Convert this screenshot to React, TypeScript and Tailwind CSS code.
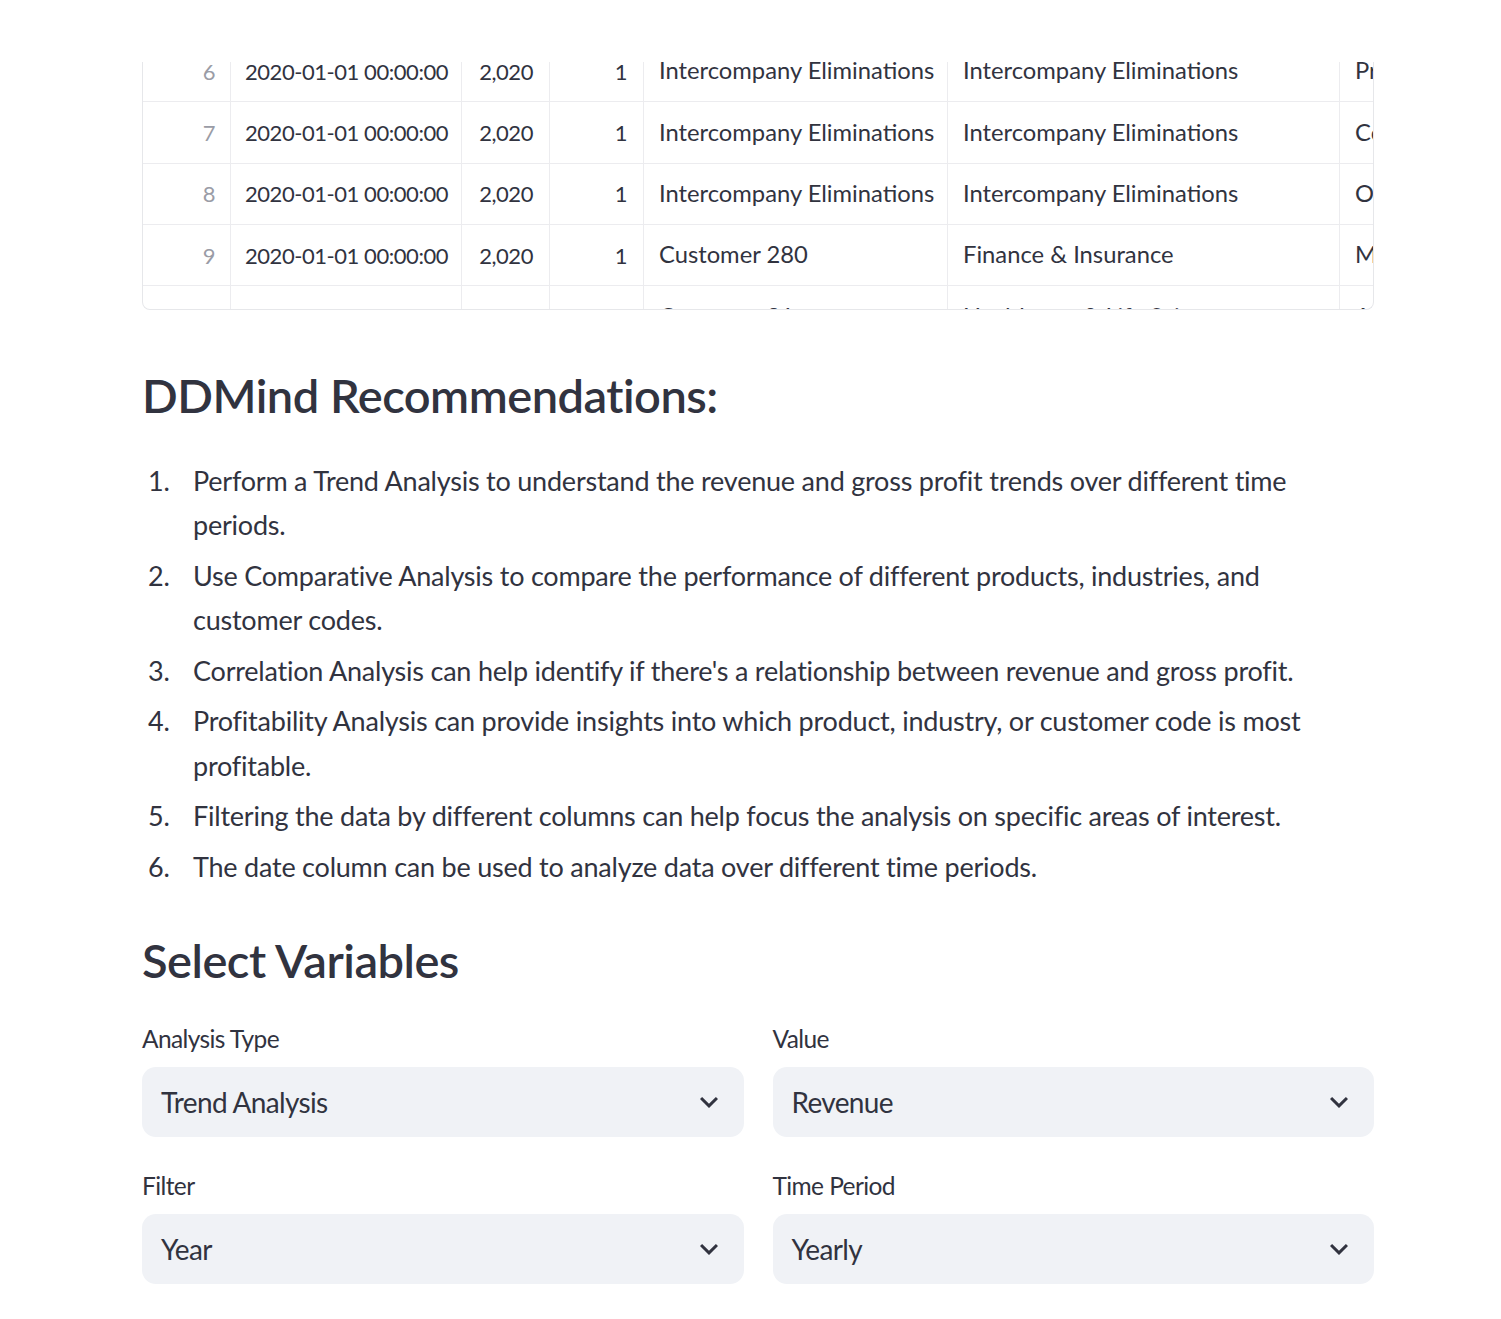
const ROWS = [
  { idx: 6, date: "2020-01-01 00:00:00", year: "2,020", month: "1", customer: "Intercompany Eliminations", industry: "Intercompany Eliminations", last: "Products" },
  { idx: 7, date: "2020-01-01 00:00:00", year: "2,020", month: "1", customer: "Intercompany Eliminations", industry: "Intercompany Eliminations", last: "Consulting" },
  { idx: 8, date: "2020-01-01 00:00:00", year: "2,020", month: "1", customer: "Intercompany Eliminations", industry: "Intercompany Eliminations", last: "Other" },
  { idx: 9, date: "2020-01-01 00:00:00", year: "2,020", month: "1", customer: "Customer 280", industry: "Finance & Insurance", last: "Maintenance" },
  { idx: 10, date: "2020-01-01 00:00:00", year: "2,020", month: "1", customer: "Customer 31", industry: "Healthcare & Life Sciences", last: "A" },
];

const RECS = [
  "Perform a Trend Analysis to understand the revenue and gross profit trends over different time periods.",
  "Use Comparative Analysis to compare the performance of different products, industries, and customer codes.",
  "Correlation Analysis can help identify if there's a relationship between revenue and gross profit.",
  "Profitability Analysis can provide insights into which product, industry, or customer code is most profitable.",
  "Filtering the data by different columns can help focus the analysis on specific areas of interest.",
  "The date column can be used to analyze data over different time periods.",
];

function Chevron() {
  return (
    <svg width="36" height="36" viewBox="0 0 24 24" fill="#31333f">
      <path d="M7.41 8.59 12 13.17l4.59-4.58L18 10l-6 6-6-6 1.41-1.41z" />
    </svg>
  );
}

function Select({ label, value }: { label: string; value: string }) {
  return (
    <div className="flex flex-col">
      <p className="text-[24.5px] leading-[28px] tracking-[-0.6px] text-[#31333f]">{label}</p>
      <div className="mt-[14px] flex h-[70px] items-center justify-between rounded-[14px] bg-[#f0f2f6] pl-[19px] pr-[17px]">
        <span className="text-[28px] tracking-[-0.65px] text-[#31333f]">{value}</span>
        <Chevron />
      </div>
    </div>
  );
}

export default function App() {
  return (
    <div className="min-h-[1319px] bg-white pb-[35px] text-[#31333f]" style={{ fontFamily: "Lato, 'Liberation Sans', sans-serif" }}>
      <div className="ml-[142px] w-[1232px]">
        {/* dataframe, scrolled */}
        <div className="mt-[62px] h-[248px] overflow-hidden rounded-b-[8px] border-x border-b border-[#e6e7ea]">
          <div className="-mt-[21px]">
            {ROWS.map((r) => (
              <div
                key={r.idx}
                className="grid h-[61.3px] grid-cols-[88px_231px_88px_94px_304px_392px_200px] border-b border-[#ececef] text-[22px] tracking-[-0.45px]"
              >
                <div className="flex items-center justify-end border-r border-[#ececef] pr-[15px] text-[#9a9ca6]">{r.idx}</div>
                <div className="flex items-center border-r border-[#ececef] pl-[14px] whitespace-nowrap">{r.date}</div>
                <div className="flex items-center justify-end border-r border-[#ececef] pr-[16px]">{r.year}</div>
                <div className="flex items-center justify-end border-r border-[#ececef] pr-[16px]">{r.month}</div>
                <div className="flex items-center border-r border-[#ececef] pl-[15px] text-[23.75px] tracking-[0px] whitespace-nowrap">{r.customer}</div>
                <div className="flex items-center border-r border-[#ececef] pl-[15px] text-[23.75px] tracking-[0px] whitespace-nowrap">{r.industry}</div>
                <div className="flex items-center pl-[15px] text-[23.75px] tracking-[0px] whitespace-nowrap">{r.last}</div>
              </div>
            ))}
          </div>
        </div>

        <h3 className="mt-[55px] text-[47px] leading-[60px] font-semibold tracking-[-0.5px]">DDMind Recommendations:</h3>

        <ol className="mt-[33.5px] flex flex-col gap-[5.6px]">
          {RECS.map((t, i) => (
            <li key={i} className="flex text-[27px] leading-[44.8px] tracking-[-0.22px]">
              <span className="w-[51px] shrink-0 pl-[6px]">{i + 1}.</span>
              <span className="pr-[36px]">{t}</span>
            </li>
          ))}
        </ol>

        <h3 className="mt-[40.6px] text-[47px] leading-[60px] font-semibold tracking-[-0.5px]">Select Variables</h3>

        <div className="mt-[35px] grid grid-cols-2 gap-x-[29px] gap-y-[35px]">
          <Select label="Analysis Type" value="Trend Analysis" />
          <Select label="Value" value="Revenue" />
          <Select label="Filter" value="Year" />
          <Select label="Time Period" value="Yearly" />
        </div>
      </div>
    </div>
  );
}
